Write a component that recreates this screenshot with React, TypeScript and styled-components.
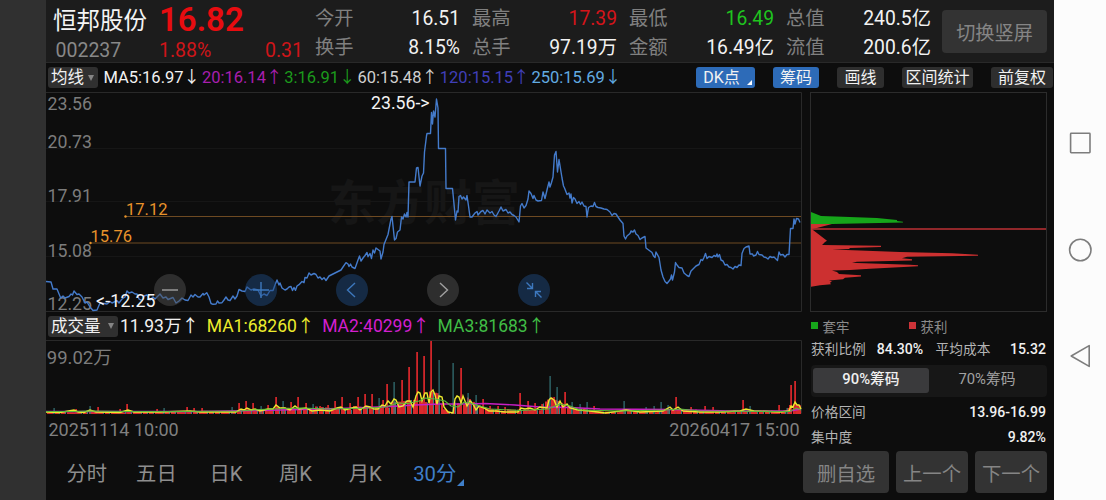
import styled, { createGlobalStyle } from "styled-components";

const GlobalStyle = createGlobalStyle`
  * {
    box-sizing: border-box;
  }
  body {
    margin: 0;
    background: #0d0d0d;
    font-family: Roboto, "Noto Sans CJK SC", sans-serif;
  }
  button {
    border: 0;
    padding: 0;
    font-family: inherit;
  }
`;

const STATS = [
  { label: "今开", value: "16.51" },
  { label: "最高", value: "17.39", color: "#d4141a" },
  { label: "最低", value: "16.49", color: "#1fc41f" },
  { label: "总值", value: "240.5亿" },
  { label: "换手", value: "8.15%" },
  { label: "总手", value: "97.19万" },
  { label: "金额", value: "16.49亿" },
  { label: "流值", value: "200.6亿" },
];

const AVERAGES = [
  { text: "MA5:16.97", arrow: "↓", color: "#f2f2f2" },
  { text: "20:16.14", arrow: "↑", color: "#a81fae" },
  { text: "3:16.91", arrow: "↓", color: "#1c9a1c" },
  { text: "60:15.48", arrow: "↑", color: "#d0d0d0" },
  { text: "120:15.15", arrow: "↑", color: "#403fb8" },
  { text: "250:15.69", arrow: "↓", color: "#62abe2" },
];

const VOLUMES = [
  { text: "11.93万", arrow: "↑", color: "#f2f2f2" },
  { text: "MA1:68260", arrow: "↑", color: "#ecec2c" },
  { text: "MA2:40299", arrow: "↑", color: "#d41fd0" },
  { text: "MA3:81683", arrow: "↑", color: "#40bd45" },
];

const PERIODS = ["分时", "五日", "日K", "周K", "月K"];

const PRICE_LABELS = [
  { text: "23.56", y: 110 },
  { text: "20.73", y: 147.5 },
  { text: "17.91", y: 202 },
  { text: "15.08", y: 256.7 },
  { text: "12.25", y: 309.5 },
];

const PRICE_LINE =
  "46,281.5 51,282 53,289 57,289 60.7,298 63,296 65,298 69,296.5 71,294 72.5,295 74,291 77,294.5 79,294 82,297 85,303 87,302 90,307 93,310.5 97,310 100,303 104,303.5 107,304 110,301.5 112,303 117,300.7 119,303 122,299 125,297 127,291 129,293 132,292 135,294 137,294 139,299 142,300.7 144,296 147,295 150,300 153,297 155,299 158,296 160,294 163,298 166,297 168,299.5 173,297.5 176,303 179,301 182,298 185,300 188,300.5 191,295 193,297 195,294.5 198,297 200,297 203,293.5 204,295 206.7,292.7 209,297 211,303.5 213,304.3 216,304 217.5,301 219,303 222,302.7 224,300 226,297 228,300 230,300.7 233,296 235,299 237,296 239,289.5 242,291 245,291.5 247,287 249,288.5 251,290 254,289 258,290 261,296 264,294 267,295.5 270,290.5 273,290.5 275,285 277,280 279,285 280,283 282,288 285,290 287,289 289,287 291,286.5 292.5,290.5 294,287.5 295.5,290.3 297,286 299,284.7 302,281.5 304,282.7 305,277.5 307,278 309,273 311,275 314,273.5 316,274.5 318,278 320,277 322,279.5 324,277.7 326,280.5 329,276 333,274 337,272 341,270 343,267 346,262.7 348,264 349,266.5 350.5,264 352,267 355,268.5 358,260 359.5,256 361,261 363,258 365,255.5 367,252.5 368,256.7 370,253.5 371.5,258.5 373,250 374.5,253 376,248 378,249.5 380,251 381,259 383,252 384,244.5 388,234.5 391,219 392,216.5 394.5,240 396,238.5 397.5,232 400,230 401.5,217 403,219 404.5,214 406,217 407,212.5 408,217 409,182 415,182 416.5,168 418,167.5 420,186 422,176 423.5,173 424.5,152 426.5,136 427,133.5 430.5,133.5 431.5,112.5 432.5,124 433.5,111 435,117 436.5,99 438,108 438.5,148.5 445.5,148.5 446,188.5 452.5,188.5 454,204 455.5,220 457,211 458,212 459,196.5 460.5,195.5 462,199 463.5,197 466,200 467,195.5 468.5,206 470,217 472,217 475,213 477,211.5 478,215 481,211.5 483,210.5 485,214 487,210 490,213 492,211.5 494,215 496,216.5 499,211 501,207 503,211 506,209.5 508,213 510,212 512,214.5 514,215.5 516,217 519,222 520.5,206 522,203.5 524,208 526,205.5 528,199 529,191 531,193.5 533,198.5 534,195.5 536,200 538,201 541.5,200.5 543,192 545,198.5 547,190 549,182 550,187 551.5,182.5 553,177 554.5,155 556,151.5 557.5,172 559,159.5 562,178 563.5,186 564.5,188 567,194.5 569,193 570,198 571,194 572,203 573.5,197.5 575,199 577,203.5 579,201.5 580.5,204.5 582,202 584,206 586,206.5 587,217 588.5,207.5 591,206 593,206.5 594.5,202.5 596,206.5 598,207.5 601,208 604,209 607,209.5 610,212 612,215.5 614,213.5 616,214 618,217 620,220 623,223.5 624,236 625.5,239 627,236 630,233.5 631,231 633,232 634.5,230 636,234 638,235.5 640,239.5 642,238 645,236.5 646,248 648,249.5 650,251 652,252.5 653.5,256 655,257.5 656,252 659,257.5 661,270 663,277 665,281.5 667,283.5 669,281 670.5,279 671.5,275 672.5,280 674.5,272 675.5,262.5 677,265 679,267.5 682,268 684,273 687,275.5 689,276.5 691,271 693,269 696,266 699,264.5 701,259.5 702.5,260.5 704,257.5 705.5,253.5 707,258.5 709,256.5 712,257.5 714,255.5 716,256.5 717,254 718,257 719.5,254.5 721,260 723,261 725,265 727,264.5 729,267 731,267.5 733,269 735,266.5 737,267.5 739,265 741,265.5 742,253.5 744,248.5 746,247 749,246 750,254 752.5,254 753.5,256 756,255 757.5,251.5 759,254.5 762,255 764,257 766,257.5 768,259 770,256.5 772,257.5 774,257 776,259 777.5,260.5 779,252 780.5,255 783,254.5 785,257 787,254.5 789,254.5 790.5,228.5 793,228.5 794,219 795,224 796.5,218.5 798.5,219 800,222.5";

// [x, top, up]
const SPIKES: [number, number, boolean][] = [
  [54, 408, false], [76, 409, true], [90, 406, false], [98, 407, true], [120, 409, true], [127, 404, true],
  [157, 409, true], [164, 408, false], [187, 407, true], [194, 408, true], [202, 408, true], [232, 407, false],
  [239, 403, true], [246, 401, true], [253, 403, true], [261, 406, false], [268, 405, true], [276, 397, true],
  [283, 401, false], [291, 402, true], [298, 397, true], [306, 403, true], [313, 404, false], [320, 406, true],
  [328, 405, true], [335, 401, true], [342, 397, true], [350, 403, true], [358, 397, true], [365, 394, true],
  [372, 394, true], [379, 398, false], [383, 400, true], [387, 384, true], [394, 382, false], [402, 380, true],
  [409, 367, true], [417, 352, true], [424, 356, true], [431, 341, true], [439, 360, false], [453, 363, false],
  [461, 368, true], [468, 393, false], [476, 395, false], [483, 399, true], [490, 406, true], [498, 406, true],
  [505, 407, true], [520, 393, true], [528, 401, true], [535, 403, true], [542, 404, true], [550, 376, false],
  [554, 397, true], [557, 387, false], [565, 392, true], [572, 402, false], [580, 404, false], [587, 402, false],
  [594, 406, true], [624, 401, false], [646, 407, false], [654, 406, false], [661, 402, false], [668, 405, false],
  [676, 397, true], [691, 407, true], [705, 406, true], [713, 407, true], [743, 400, true], [750, 406, false],
  [779, 405, true], [787, 408, false], [791, 385, true], [795, 381, true],
];

// envelope of the ordinary bars between the opening spikes
const ENVELOPE: [number, number][] = [
  [46, 2], [220, 3], [270, 6], [370, 7], [400, 12], [415, 18], [437, 20], [443, 5], [451, 2], [454, 15],
  [465, 15], [480, 8], [510, 4], [540, 6], [550, 16], [566, 11], [578, 5], [600, 3], [660, 3], [680, 6],
  [700, 3], [785, 3], [790, 12], [801, 12],
];

const envelopeAt = (x: number) => {
  const i = Math.max(1, ENVELOPE.findIndex(([ex]) => ex >= x));
  const [x0, h0] = ENVELOPE[i - 1];
  const [x1, h1] = ENVELOPE[i];
  return h0 + ((h1 - h0) * (x - x0)) / (x1 - x0);
};

const BASE_BARS = Array.from({ length: 377 }, (_, i) => {
  const x = 47 + i * 2;
  const noise = ((i * 37) % 19) / 19;
  return { x, h: envelopeAt(x) * (0.6 + noise * 0.6), up: (i * 29) % 11 < 8 };
});

const MA1_LINE =
  "46,412 60,412.5 74,410 78,412 84,412.5 90,410 96,412 120,412.5 128,410 134,412 160,412 190,411 200,412 236,412 241,409 244,410 247,408 251,410 255,409 260,411 268,409 273,409 276,405 280,408 285,408 290,410 295,406 299,409 306,408 312,411 320,410 330,411 337,408 341,407 345,410 352,408 356,407 360,410 366,406 370,407 374,409 378,409 382,405 385,406 388,401 391,404 394,399 396,400 399,407 403,406 407,401 410,401 413,407 416,396 418,392 420,393 422,401 425,393 427,393 429,403 431,392 433,390 435,395 437,404 439,396 442,397 444,407 448,412 453,413 455,399 457,396 459,397 461,403 463,396 465,401 467,406 470,401 473,404 476,410 479,406 484,408 489,411 496,411 505,412 518,412 521,408 525,409 530,408 535,410 540,407 547,408 549,400 551,398 554,400 557,407 560,401 563,407 567,404 570,408 578,410 590,411 605,413 620,411 626,410 640,412 663,411 670,407 673,410 678,407 683,411 700,412 720,412 740,411 746,409 754,411 780,412 789,411 791,406 793,407 795,402 797,405 799,405 801,409";

const MA3_LINE =
  "46,411.5 74,411.5 90,411 127,411.5 180,411.5 240,411 260,409.5 285,408.5 300,408 330,409 350,408.5 370,408 385,407 398,403 408,403.5 419,401 425,398 435,399 445,401 451,406 458,407 464,402 470,403 480,406 490,409 520,410.5 548,409 560,404 570,406 580,410 620,411 665,410 680,409 700,411 790,411.5 796,408 801,410";

const MA2_LINE =
  "46,411.5 200,411.5 260,410.5 340,408.5 390,406.5 415,405 440,404 465,404 485,403.5 515,405 540,407 570,407.5 600,409 670,409.5 730,411 790,411 801,409";

const CHIP_TRAPPED =
  "811,212 821,216 843,216.7 877,218 897,220 897,221 903,221.7 903,222.6 867,223.2 832,224 811,224";

const CHIP_PROFIT =
  "811,224 832,224 817,228 812,229 813,230 827,240.7 825,242 822,245 881,245.7 881,247 850,248 849,249 832,249.6 853,250.2 900,252 952,253.3 978,254.7 978,255.7 907,256.7 902,258.3 912,259.3 912,260.4 857,261.7 852,262.4 857,263 910,264.7 918,265.3 918,266.3 870,268.7 850,270 832,270.4 837,272 839,274 861,275.3 861,276.5 845,277.7 843,279.3 829,280.4 832,281.3 830,282.7 831,284.3 820,285.3 811,286.7";

const PriceChart = () => (
  <ChartSvg width="756" height="220" viewBox="46 92 756 220">
    <Watermark x="328" y="220">东方财富</Watermark>
    <g stroke="#161616">
      <path d="M46 148.5H801M46 201.5H801M46 256.5H801" />
    </g>
    <path d="M46 92.5H801.5V311.5H46" fill="none" stroke="#292929" />
    <path d="M126 216.5H801M91 243H801" stroke="#6e4a22" strokeWidth="1.2" />
    <circle cx="125.5" cy="216.5" r="1.2" fill="#e8932b" />
    <circle cx="90.5" cy="243" r="1.2" fill="#e8932b" />
    {PRICE_LABELS.map((label) => (
      <AxisText key={label.text} x="47.5" y={label.y}>
        {label.text}
      </AxisText>
    ))}
    <CostText x="126" y="215.3">17.12</CostText>
    <CostText x="90.5" y="241.5">15.76</CostText>
    <polyline
      points={PRICE_LINE}
      fill="none"
      stroke="#447bcb"
      strokeWidth="1.4"
      strokeLinejoin="round"
    />
    <MarkText x="371" y="108.5">23.56-&gt;</MarkText>
    <MarkText x="96" y="307.3" textLength="59.5">&lt;-12.25</MarkText>
  </ChartSvg>
);

const VolumeChart = () => (
  <ChartSvg width="756" height="74" viewBox="46 340 756 74">
    <path d="M46 340.5H801.5V413.5" fill="none" stroke="#292929" />
    <VolumeText x="46.8" y="363.7">99.02万</VolumeText>
    {BASE_BARS.map((bar) => (
      <rect
        key={bar.x}
        x={bar.x}
        y={414 - bar.h}
        width={bar.up ? 2 : 1}
        height={bar.h}
        fill={bar.up ? "#d92a2c" : "#3c7f80"}
      />
    ))}
    {SPIKES.map(([x, top, up]) => (
      <rect
        key={x}
        x={up ? x - 0.8 : x - 0.5}
        y={top}
        width={up ? 1.8 : 1.2}
        height={414 - top}
        fill={up ? "#d0262a" : "#36777b"}
      />
    ))}
    <g fill="none" strokeWidth="1.4">
      <polyline points={MA2_LINE} stroke="#c81fc4" />
      <polyline points={MA1_LINE} stroke="#ece82e" />
      <polyline points={MA3_LINE} stroke="#5cbb3c" strokeWidth="1.1" />
    </g>
  </ChartSvg>
);

const ChipChart = () => (
  <ChartSvg width="237" height="220" viewBox="810 92 237 220">
    <rect x="810.5" y="92.5" width="236" height="219" fill="none" stroke="#2c2c2c" />
    <polygon points={CHIP_TRAPPED} fill="#16a51a" />
    <polygon points={CHIP_PROFIT} fill="#cc3030" />
    <path d="M811 229H1046" stroke="#bd3034" strokeWidth="1.4" />
  </ChartSvg>
);

const App = () => {
  return (
    <>
      <GlobalStyle />
      <Screen>
        <LeftRail />
        <Main>
          <Header>
            <Quote>
              <QuoteTop>
                <StockName>恒邦股份</StockName>
                <Price>16.82</Price>
              </QuoteTop>
              <QuoteBottom>
                <Code>002237</Code>
                <Change>1.88%</Change>
                <Change>0.31</Change>
              </QuoteBottom>
            </Quote>
            <Stats>
              {STATS.map((stat) => (
                <Stat key={stat.label}>
                  <StatLabel>{stat.label}</StatLabel>
                  <StatValue $color={stat.color}>{stat.value}</StatValue>
                </Stat>
              ))}
            </Stats>
            <RotateButton>切换竖屏</RotateButton>
          </Header>

          <Toolbar>
            <Picker $width={50}>
              均线
              <Caret />
            </Picker>
            <Indicators $size={16.5} $gap={1.9} $left={5.5}>
              {AVERAGES.map((item) => (
                <Indicator key={item.text} $color={item.color}>
                  {item.text}
                  {item.arrow}
                </Indicator>
              ))}
            </Indicators>
            <Tools>
              <Tool $width={59} $active $corner>
                DK点
                <Corner $color="#fff" />
              </Tool>
              <Tool $width={46} $active>筹码</Tool>
              <Tool $width={47}>画线</Tool>
              <Tool $width={71}>区间统计</Tool>
              <Tool $width={62}>前复权</Tool>
            </Tools>
          </Toolbar>

          <Content>
            <Charts>
              <PriceArea>
                <PriceChart />
                <Controls>
                  <Control>
                    <svg width="32" height="32" viewBox="0 0 32 32">
                      <path d="M8 16H24" />
                    </svg>
                  </Control>
                  <Control $blue>
                    <svg width="32" height="32" viewBox="0 0 32 32">
                      <path d="M8 16H24M16 8V24" />
                    </svg>
                  </Control>
                  <Control $blue>
                    <svg width="32" height="32" viewBox="0 0 32 32">
                      <path d="M19 9L11.5 16L19 23" />
                    </svg>
                  </Control>
                  <Control>
                    <svg width="32" height="32" viewBox="0 0 32 32">
                      <path d="M13 9L20.5 16L13 23" />
                    </svg>
                  </Control>
                  <Control $blue>
                    <svg width="32" height="32" viewBox="0 0 32 32">
                      <path d="M8.5 8.5L14.5 14.5M14.5 9V14.5H9M23.5 23.5L17.5 17.5M17.5 23V17.5H23" />
                    </svg>
                  </Control>
                </Controls>
              </PriceArea>
              <VolumeBar>
                <Picker $width={70}>
                  成交量
                  <Caret />
                </Picker>
                <Indicators $size={17.5} $gap={7.8} $left={2}>
                  {VOLUMES.map((item) => (
                    <Indicator key={item.text} $color={item.color}>
                      {item.text}
                      {item.arrow}
                    </Indicator>
                  ))}
                </Indicators>
              </VolumeBar>
              <VolumeChart />
              <Dates>
                <span>20251114 10:00</span>
                <span>20260417 15:00</span>
              </Dates>
              <Periods>
                {PERIODS.map((period) => (
                  <Period key={period}>{period}</Period>
                ))}
                <Period $active>
                  30分
                  <Corner $color="#3f7fc9" $outside />
                </Period>
              </Periods>
            </Charts>

            <Side>
              <ChipChart />
              <Legend>
                <LegendItem>
                  <Square $color="#16a51a" />
                  套牢
                </LegendItem>
                <LegendItem>
                  <Square $color="#cc3338" />
                  获利
                </LegendItem>
              </Legend>
              <ChipRow $height={24}>
                <span>获利比例</span>
                <Ratio>84.30%</Ratio>
                <span>平均成本</span>
                <b>15.32</b>
              </ChipRow>
              <Segmented>
                <Segment $active>90%筹码</Segment>
                <Segment>70%筹码</Segment>
              </Segmented>
              <ChipRow $height={25}>
                <span>价格区间</span>
                <b>13.96-16.99</b>
              </ChipRow>
              <ChipRow $height={24}>
                <span>集中度</span>
                <b>9.82%</b>
              </ChipRow>
              <Actions>
                <Action $width={86}>删自选</Action>
                <Action $width={72}>上一个</Action>
                <Action $width={72}>下一个</Action>
              </Actions>
            </Side>
          </Content>
        </Main>
        <SystemNav>
          <svg width="52" height="500" viewBox="1054 0 52 500">
            <g fill="none" stroke="#7d7d7d" strokeWidth="1.6" strokeLinejoin="round">
              <rect x="1070.6" y="133.3" width="19.4" height="19.4" rx="0.6" />
              <circle cx="1080.3" cy="250" r="10.7" />
              <path d="M1071.2 356L1089.2 345.6V366.4Z" />
            </g>
          </svg>
        </SystemNav>
      </Screen>
    </>
  );
};

const Screen = styled.div`
  display: flex;
  width: 1106px;
  height: 500px;
  overflow: hidden;
  background: #0d0d0d;
`;

const LeftRail = styled.div`
  width: 46px;
  flex: none;
  background: #303030;
`;

const Main = styled.main`
  width: 1008px;
  flex: none;
  display: flex;
  flex-direction: column;
`;

const SystemNav = styled.nav`
  width: 52px;
  flex: none;
  background: #fcfcfc;
`;

const Header = styled.header`
  display: flex;
  height: 63px;
  background: #1c1c1c;
  border-bottom: 1px solid #292929;
`;

const Quote = styled.div`
  width: 269px;
  flex: none;
  padding-left: 7px;
`;

const QuoteTop = styled.div`
  display: flex;
  align-items: center;
  height: 40px;
`;

const StockName = styled.h1`
  width: 106px;
  margin: 0;
  padding-top: 2px;
  font-size: 23.5px;
  font-weight: 400;
  line-height: 39px;
  color: #f4f4f4;
`;

const Price = styled.strong`
  font-size: 33px;
  font-weight: 600;
  line-height: 40px;
  color: #e80c10;
`;

const QuoteBottom = styled.div`
  display: flex;
  width: 250px;
  font-size: 19.5px;
  line-height: 21px;
`;

const Code = styled.span`
  width: 106px;
  padding-left: 2.5px;
  color: #888;
`;

const Change = styled.span`
  color: #cf1519;
  & + & {
    margin-left: auto;
  }
`;

const Stats = styled.div`
  display: grid;
  grid-template-columns: repeat(4, 146px);
  grid-template-rows: 29px 29px;
  column-gap: 11px;
  padding-top: 4px;
  font-size: 19.3px;
  line-height: 29px;
`;

const Stat = styled.div`
  display: flex;
  justify-content: space-between;
  padding-right: 1px;
`;

const StatLabel = styled.span`
  color: #808080;
`;

const StatValue = styled.span<{ $color?: string }>`
  color: ${({ $color }) => $color || "#f2f2f2"};
`;

const RotateButton = styled.button`
  width: 105px;
  height: 43px;
  margin: 10px 0 0 10px;
  border-radius: 4px;
  background: #333;
  font-size: 19.2px;
  color: #858585;
`;

const Toolbar = styled.div`
  display: flex;
  align-items: center;
  height: 29px;
  padding-left: 2px;
`;

const Picker = styled.button<{ $width: number }>`
  display: flex;
  align-items: center;
  justify-content: space-between;
  width: ${({ $width }) => $width}px;
  height: 21px;
  padding: 0 4px 0 3px;
  border-radius: 3px;
  background: #303030;
  font-size: 16.5px;
  line-height: 21px;
  color: #f2f2f2;
`;

const Caret = styled.i`
  border: 3.5px solid transparent;
  border-top: 6px solid #858585;
  border-bottom: 0;
`;

const Indicators = styled.div<{ $size: number; $gap: number; $left: number }>`
  display: flex;
  gap: ${({ $gap }) => $gap}px;
  margin-left: ${({ $left }) => $left}px;
  font-size: ${({ $size }) => $size}px;
  line-height: 24px;
`;

const Indicator = styled.span<{ $color: string }>`
  white-space: nowrap;
  color: ${({ $color }) => $color};
`;

const Tools = styled.div`
  display: flex;
  gap: 18px;
  margin-left: auto;
  padding-right: 1px;
`;

const Tool = styled.button<{ $width: number; $active?: boolean; $corner?: boolean }>`
  position: relative;
  width: ${({ $width }) => $width}px;
  height: 21px;
  padding-right: ${({ $corner }) => ($corner ? 8 : 0)}px;
  border-radius: 3px;
  background: ${({ $active }) => ($active ? "#2d6bb8" : "#2e2e2e")};
  font-size: 16px;
  line-height: 21px;
  white-space: nowrap;
  color: #f2f2f2;
`;

const Corner = styled.i<{ $color: string; $outside?: boolean }>`
  position: absolute;
  right: ${({ $outside }) => ($outside ? -7 : 3)}px;
  bottom: ${({ $outside }) => ($outside ? 1 : 3)}px;
  border-left: ${({ $outside }) => ($outside ? 7 : 5)}px solid transparent;
  border-bottom: ${({ $outside }) => ($outside ? 7 : 5)}px solid ${({ $color }) => $color};
`;

const Content = styled.div`
  display: flex;
  height: 408px;
`;

const Charts = styled.section`
  width: 756px;
  flex: none;
`;

const ChartSvg = styled.svg`
  display: block;
  overflow: visible;
`;

const Watermark = styled.text`
  font-size: 48px;
  font-weight: 700;
  fill: #161616;
`;

const AxisText = styled.text`
  font-size: 17.7px;
  fill: #7c7c7c;
`;

const VolumeText = styled(AxisText)`
  font-size: 18.5px;
`;

const CostText = styled.text`
  font-size: 16.5px;
  fill: #e8932b;
`;

const MarkText = styled.text`
  font-size: 17.7px;
  fill: #f4f4f4;
`;

const PriceArea = styled.div`
  position: relative;
  height: 220px;
`;

const Controls = styled.div`
  position: absolute;
  left: 108px;
  bottom: 6px;
  display: flex;
  gap: 59px;
`;

const Control = styled.button<{ $blue?: boolean }>`
  width: 32px;
  height: 32px;
  border-radius: 50%;
  background: ${({ $blue }) => ($blue ? "rgba(30, 72, 124, 0.5)" : "rgba(80, 80, 80, 0.5)")};

  svg {
    display: block;
    fill: none;
    stroke: ${({ $blue }) => ($blue ? "#3d78bd" : "#a0a0a0")};
    stroke-width: 1.4;
  }
`;

const VolumeBar = styled.div`
  display: flex;
  align-items: center;
  height: 28px;
  padding-left: 2px;
`;

const Dates = styled.div`
  display: flex;
  justify-content: space-between;
  padding: 0 2.5px;
  font-size: 18px;
  line-height: 32px;
  color: #808080;
`;

const Periods = styled.div`
  display: flex;
  height: 54px;
  padding: 1px 0 0 6px;
`;

const Period = styled.button<{ $active?: boolean }>`
  position: relative;
  align-self: center;
  min-width: 44px;
  margin: 0 12.8px;
  background: none;
  font-size: 20.3px;
  line-height: 26px;
  color: ${({ $active }) => ($active ? "#3f7fc9" : "#8e8e8e")};
`;

const Side = styled.aside`
  width: 237px;
  margin-left: 8px;
`;

const Legend = styled.div`
  display: flex;
  height: 25px;
  padding: 2px 0 0 1px;
`;

const LegendItem = styled.span`
  display: flex;
  align-items: center;
  gap: 4.5px;
  width: 98px;
  font-size: 13.4px;
  color: #8c8c8c;
`;

const Square = styled.i<{ $color: string }>`
  width: 7px;
  height: 7px;
  background: ${({ $color }) => $color};
`;

const ChipRow = styled.div<{ $height: number }>`
  display: flex;
  padding: 0 1px;
  font-size: 13.7px;
  line-height: ${({ $height }) => $height}px;
  color: #b4b4b4;

  b {
    margin-left: auto;
    font-size: 14.1px;
    font-weight: 500;
    color: #f0f0f0;
  }
`;

const Ratio = styled.strong`
  margin: 0 12.5px 0 11px;
  font-size: 14.1px;
  font-weight: 500;
  color: #f0f0f0;
`;

const Segmented = styled.div`
  display: flex;
  height: 32px;
  margin: 4px 0 3px 1px;
  padding: 3px 2px 4px;
  border-radius: 4px;
  background: #171717;
`;

const Segment = styled.button<{ $active?: boolean }>`
  flex: 1;
  padding-bottom: 3px;
  border-radius: 3px;
  background: ${({ $active }) => ($active ? "#3a3a3c" : "none")};
  font-size: 14.8px;
  line-height: 22px;
  font-weight: ${({ $active }) => ($active ? 500 : 400)};
  color: ${({ $active }) => ($active ? "#f0f0f0" : "#a2a2a2")};
`;

const Actions = styled.div`
  display: flex;
  gap: 7px;
  margin: 2px 0 0 -7px;
`;

const Action = styled.button<{ $width: number }>`
  width: ${({ $width }) => $width}px;
  height: 42px;
  flex: none;
  border-radius: 4px;
  background: #333;
  font-size: 19.4px;
  color: #858585;
`;

export default App;
